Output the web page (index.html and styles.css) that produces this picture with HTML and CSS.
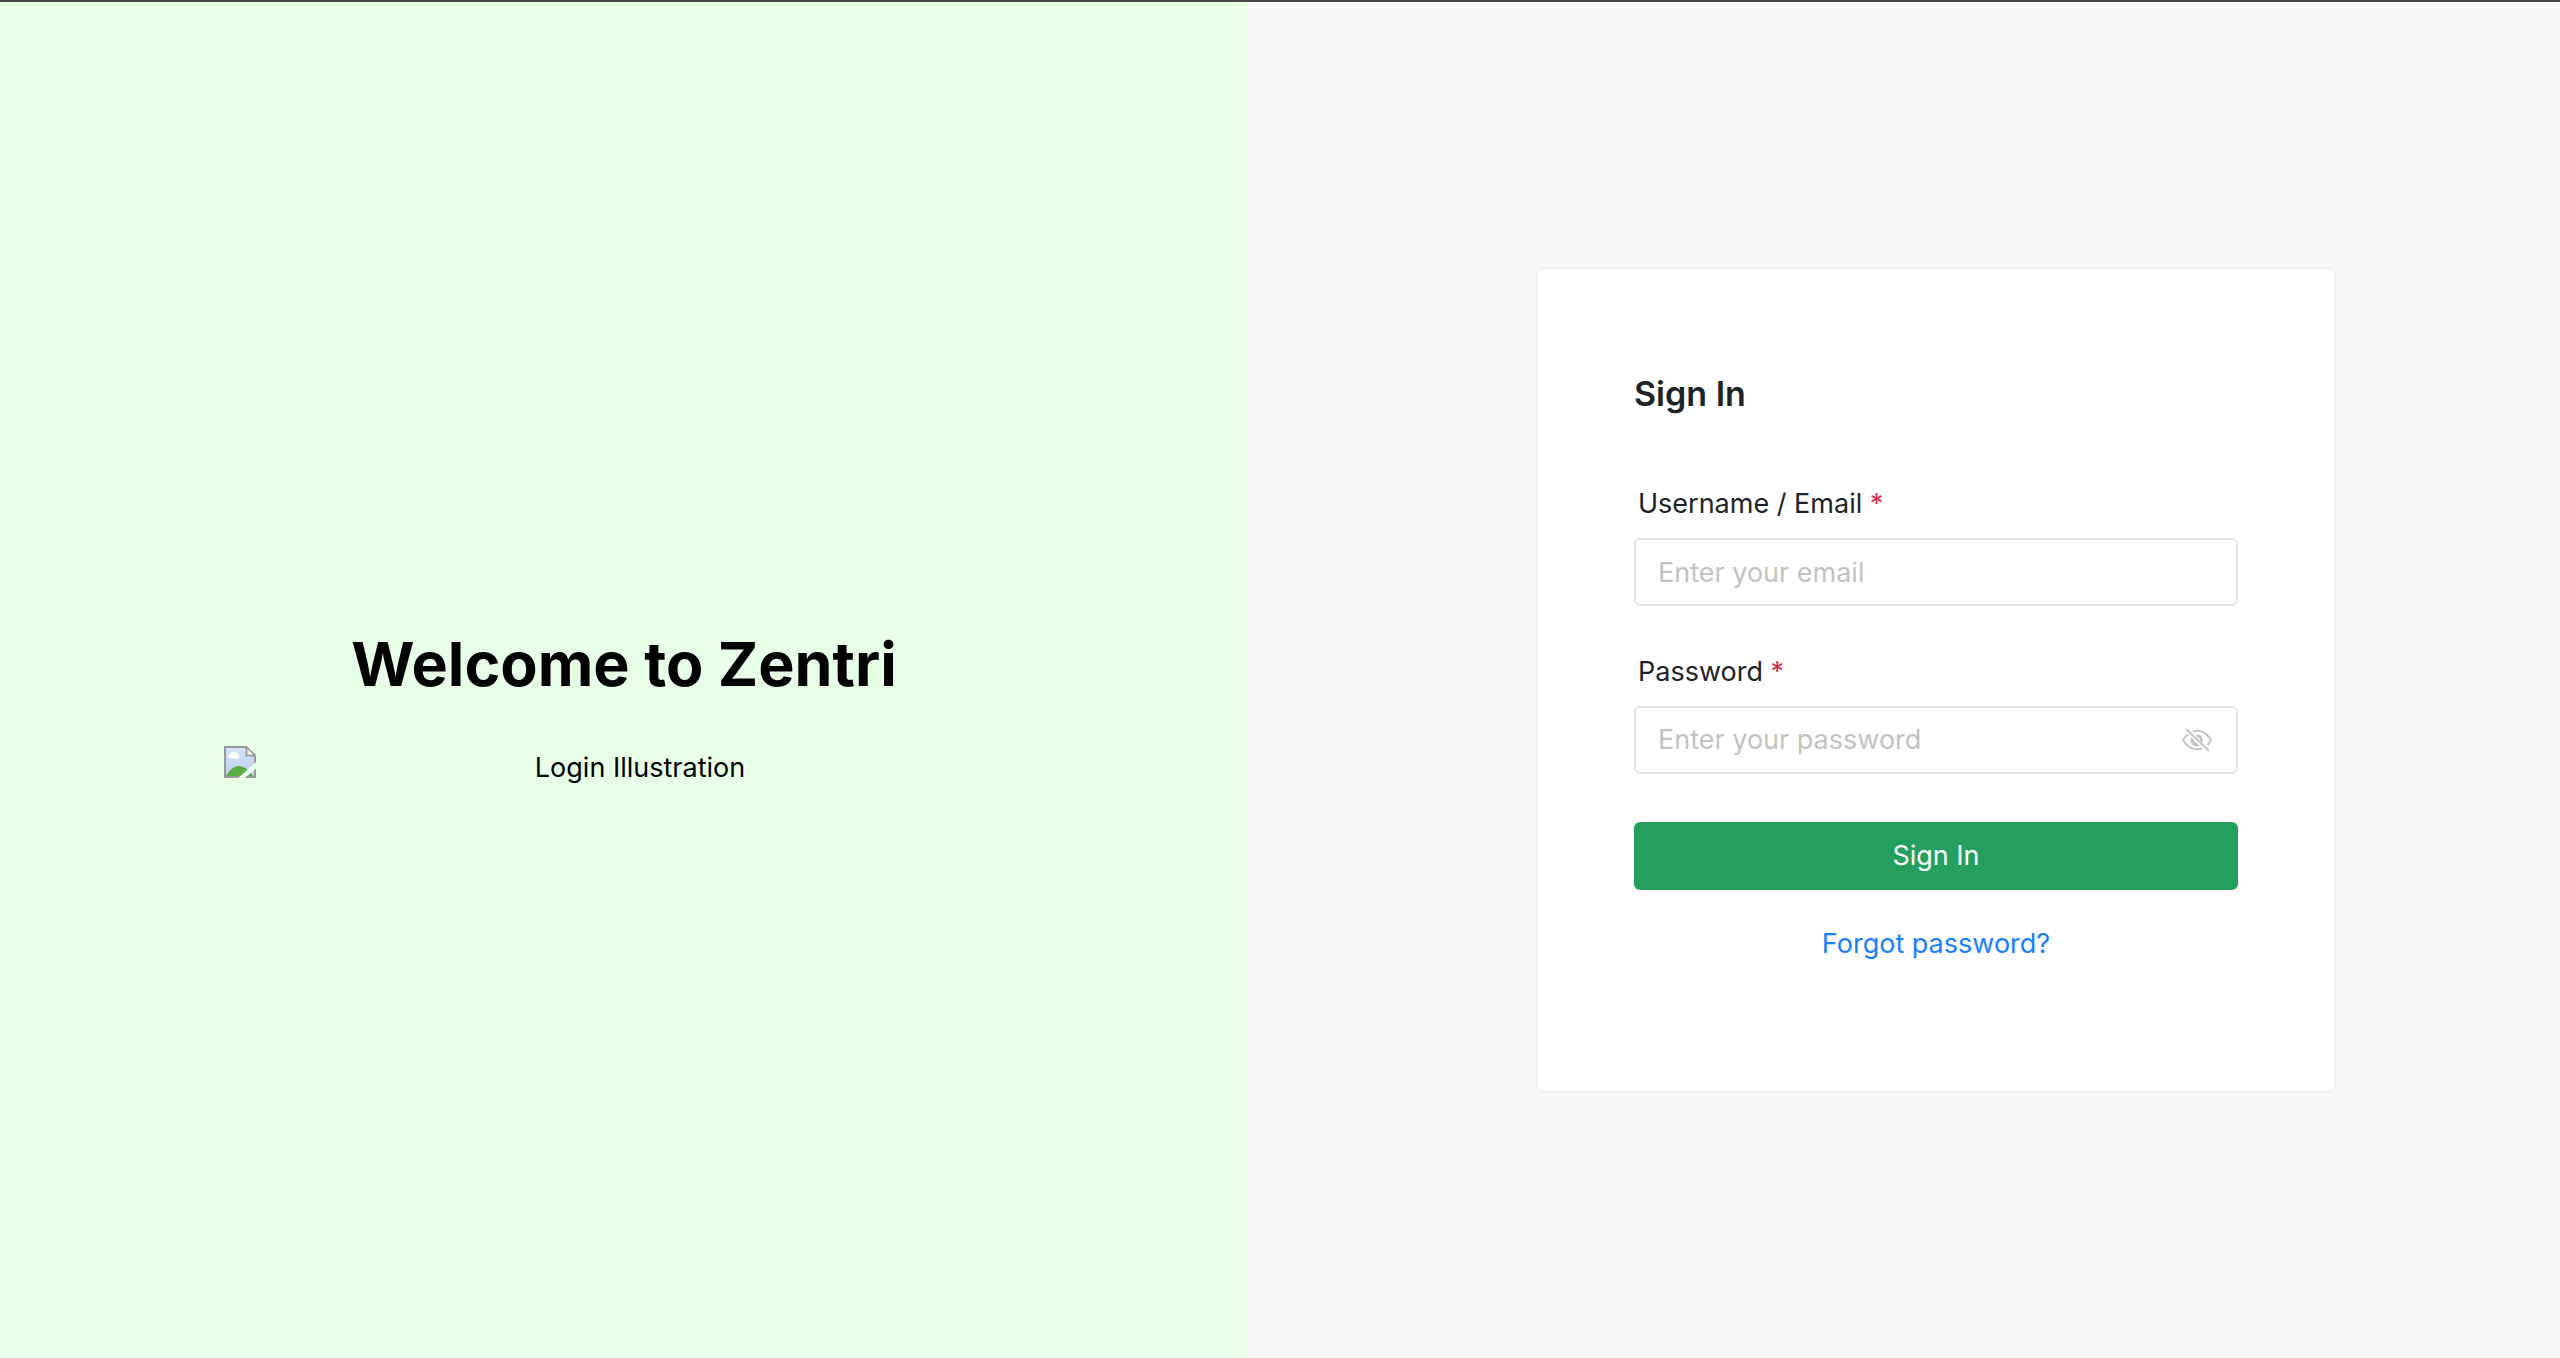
FILE: index.html
```html
<!DOCTYPE html>
<html lang="en">
<head>
<meta charset="utf-8">
<title>Sign In</title>
<link rel="stylesheet" href="styles.css">
</head>
<body>
<div class="page">
  <section class="welcome">
    <h1 class="welcome-title">Welcome to Zentri</h1>
    <div class="illustration">
      <svg class="illustration-icon" width="32" height="32" viewBox="0 0 32 32" aria-hidden="true">
        <defs>
          <linearGradient id="sky" x1="0" y1="0" x2="0" y2="1"><stop offset="0" stop-color="#d6e3fa"/><stop offset="1" stop-color="#b9cdf0"/></linearGradient>
          <clipPath id="sheet"><path d="M0 0H23L32 9V16L14 32H0ZM32 23V32H21Z"/></clipPath>
        </defs>
        <g clip-path="url(#sheet)">
          <path d="M0 0H23L32 9V32H0Z" fill="url(#sky)"/>
          <path d="M1 32C5 24 10 20 15 20S27 25 30 32Z" fill="#5aac44"/>
          <path d="M6 12.500A2.500 2.500 0 0 1 6 8A4 4 0 0 1 13.500 8A2.300 2.300 0 0 1 14 12.500Z" fill="#fff"/>
          <path d="M22 1V9H31Z" fill="#fff"/>
          <path d="M22.500 0V9.500H32M1 0V32M0 1H23L31 9V32M0 31H32" fill="none" stroke="#999" stroke-width="2"/>
        </g>
      </svg>
      <span class="illustration-text">Login Illustration</span>
    </div>
  </section>
  <main class="content">
    <form class="card">
      <h2 class="card-title">Sign In</h2>
      <div class="field">
        <label class="label" for="email">Username / Email <span class="required">*</span></label>
        <input class="input" id="email" type="text" placeholder="Enter your email">
      </div>
      <div class="field">
        <label class="label" for="password">Password <span class="required">*</span></label>
        <div class="input password">
          <input class="password-input" id="password" type="password" placeholder="Enter your password">
          <button class="toggle" type="button" aria-label="Show password">
            <svg width="30" height="24" viewBox="0 0 30 24" fill="none" stroke="#c4c4c4" stroke-width="2" aria-hidden="true">
              <path d="M11 3.500C18.500 1 25 5 29 12C28 14 27 15.500 25.500 17M6 6.500C4 8 2.500 9.500 1 12C6 20.500 13.500 22.500 20 20.500"/>
              <path d="M14 6.500A6 6 0 0 1 20.500 14.500L18 12.500C18 10.500 17 9.500 15.500 9.500ZM9.500 9A6 6 0 0 0 17.500 17.500L15 15C13.500 14.500 12 13.500 12 12Z" fill="#c4c4c4" stroke="none"/>
              <path d="M4 1L27 23"/>
            </svg>
          </button>
        </div>
      </div>
      <button class="submit" type="submit">Sign In</button>
      <a class="forgot" href="#">Forgot password?</a>
    </form>
  </main>
</div>
</body>
</html>
```
FILE: styles.css
```css
* {
  box-sizing: border-box;
}

body {
  margin: 0;
  font-family: Inter, "Liberation Sans", sans-serif;
  font-size: 27px;
  line-height: 44px;
  color: #1d2327;
}

.page {
  display: grid;
  grid-template-columns: 39fr 41fr;
  min-height: 100vh;
  border-top: 2px solid #464646;
  background: #f6f7fb;
}

.welcome {
  display: flex;
  flex-direction: column;
  align-items: center;
  justify-content: center;
  gap: 42px;
  padding-top: 54px;
  background: #e6ffe6;
  color: #000;
}

.welcome-title {
  margin: 0;
  font-size: 61px;
  font-weight: 700;
  line-height: 80px;
}

.illustration {
  display: flex;
  align-items: flex-start;
  width: 100%;
  max-width: 800px;
}

.illustration-icon {
  flex: none;
}

.illustration-text {
  flex: 1;
  text-align: center;
}

.content {
  display: flex;
  align-items: center;
  justify-content: center;
  padding-left: 64px;
}

.card {
  display: flex;
  flex-direction: column;
  width: 100%;
  max-width: 800px;
  padding: 96px 96px 125px;
  border: 2px solid #efeff5;
  border-radius: 6px;
  background: #fff;
}

.card-title {
  margin: 0 0 59px;
  font-size: 34px;
  font-weight: 600;
  line-height: 58px;
}

.field {
  display: flex;
  flex-direction: column;
  gap: 12px;
  margin-bottom: 44px;
}

.label {
  padding-left: 4px;
}

.required {
  color: #d03050;
}

.input {
  width: 100%;
  height: 68px;
  padding: 0 22px;
  border: 2px solid #e0e0e6;
  border-radius: 6px;
  background: #fff;
  font: inherit;
}

.password {
  display: flex;
  align-items: center;
  padding-right: 24px;
}

.password-input {
  flex: 1;
  min-width: 0;
  padding: 0;
  border: 0;
  background: none;
  font: inherit;
}

.input::placeholder,
.password-input::placeholder {
  color: #c2c2c2;
  opacity: 1;
}

.toggle {
  display: flex;
  padding: 0;
  border: 0;
  background: none;
}

.submit {
  height: 68px;
  margin: 4px 0 32px;
  border: 0;
  border-radius: 6px;
  background: #249f5d;
  color: #fff;
  font: inherit;
}

.forgot {
  align-self: center;
  color: #1681ff;
  text-decoration: none;
}
```
